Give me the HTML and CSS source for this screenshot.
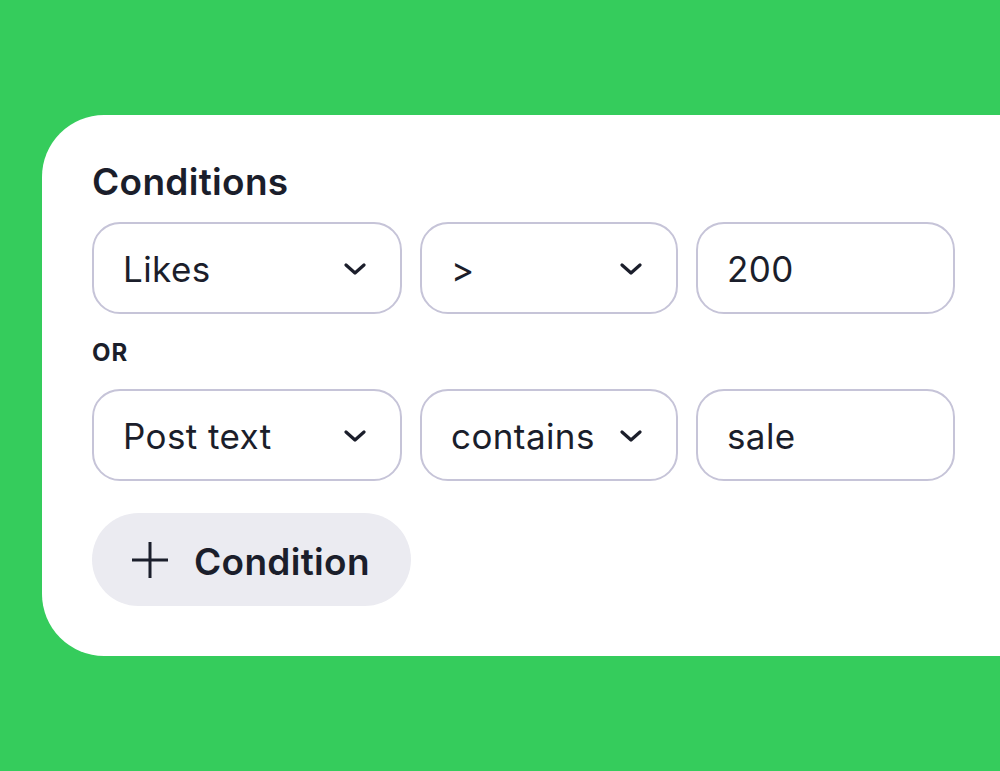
FILE: index.html
```html
<!DOCTYPE html>
<html>
<head>
<meta charset="utf-8">
<link rel="stylesheet" href="styles.css">
</head>
<body>
<div class="card">
  <h2 class="title">Conditions</h2>
  <div class="row">
    <div class="field w1"><span>Likes</span><svg class="chev" viewBox="0 0 22 12"><path d="M2 2 L11 10 L20 2"/></svg></div>
    <div class="field w2"><span>&gt;</span><svg class="chev" viewBox="0 0 22 12"><path d="M2 2 L11 10 L20 2"/></svg></div>
    <div class="field w3"><span>200</span></div>
  </div>
  <div class="or">OR</div>
  <div class="row">
    <div class="field w1"><span>Post text</span><svg class="chev" viewBox="0 0 22 12"><path d="M2 2 L11 10 L20 2"/></svg></div>
    <div class="field w2"><span>contains</span><svg class="chev" viewBox="0 0 22 12"><path d="M2 2 L11 10 L20 2"/></svg></div>
    <div class="field w3"><span>sale</span></div>
  </div>
  <button class="add"><svg class="plus" viewBox="0 0 36 36"><path d="M18 0 V36 M0 18 H36"/></svg><span class="add-label">Condition</span></button>
</div>
</body>
</html>
```

FILE: styles.css
```css
html, body {
  margin: 0;
  padding: 0;
}
body {
  background: #35cc5c;
  width: 1000px;
  height: 771px;
  overflow: hidden;
  font-family: Inter, "Noto Sans", sans-serif;
  color: #1b1e2b;
}
.card {
  margin: 115px 0 0 42px;
  width: 958px;
  height: 541px;
  box-sizing: border-box;
  background: #fff;
  border-radius: 62px 0 0 62px;
  padding: 0 0 0 50px;
  display: flex;
  flex-direction: column;
}
.title {
  margin: 44px 0 0 0;
  font-size: 37px;
  line-height: 46px;
  font-weight: 600;
  letter-spacing: 0.3px;
  height: 63px;
}
.row {
  display: flex;
  gap: 18px;
}
.field {
  box-sizing: border-box;
  height: 92px;
  border: 2px solid #c6c4d8;
  border-radius: 28px;
  display: flex;
  align-items: center;
  justify-content: space-between;
  padding: 2px 34px 0 29px;
  font-size: 35px;
  letter-spacing: 0.4px;
  font-weight: 400;
}
.w1 { width: 310px; }
.w2 { width: 258px; }
.w3 { width: 259px; }
.chev {
  width: 22px;
  height: 12px;
  fill: none;
  stroke: #1b1e2b;
  stroke-width: 3.2;
  stroke-linecap: round;
  stroke-linejoin: round;
}
.or {
  font-size: 24px;
  font-weight: 700;
  letter-spacing: 1px;
  height: 75px;
  line-height: 77px;
}
.add {
  margin-top: 32px;
  width: 319px;
  height: 93px;
  border: none;
  border-radius: 47px;
  background: #ebebf1;
  display: flex;
  align-items: center;
  padding: 0 0 0 40px;
  gap: 26px;
  font-family: inherit;
  font-size: 37px;
  font-weight: 600;
  letter-spacing: 0.3px;
  color: #1b1e2b;
}
.add-label {
  padding-top: 3px;
}
.plus {
  width: 36px;
  height: 36px;
  fill: none;
  stroke: #1b1e2b;
  stroke-width: 3;
}
```
